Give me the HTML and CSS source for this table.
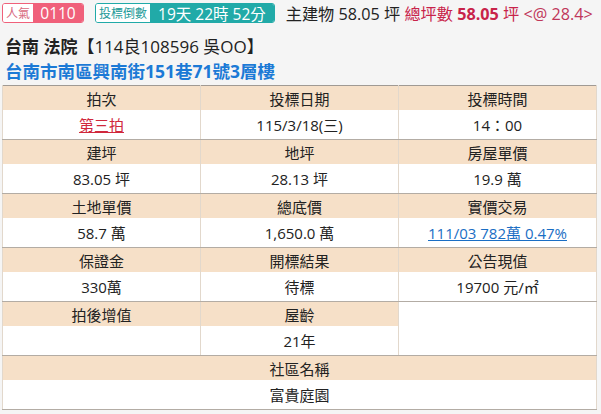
FILE: index.html
```html
<!DOCTYPE html>
<html lang="zh-Hant">
<head>
<meta charset="utf-8">
<link rel="stylesheet" href="styles.css">
</head>
<body>
<div class="page">
  <div class="topbar">
    <span class="badge badge-pink"><span class="badge-label">人氣</span><span class="badge-value">0110</span></span>
    <span class="badge badge-teal"><span class="badge-label">投標倒數</span><span class="badge-value">19天 22時 52分</span></span>
    <span class="area">主建物 58.05 坪 <span class="total">總坪數 <b>58.05</b> 坪</span> <span class="unit">&lt;@ 28.4&gt;</span></span>
  </div>
  <div class="title"><span class="court">台南 法院</span>【114良108596 吳OO】</div>
  <div class="addr">台南市南區興南街151巷71號3層樓</div>
  <table class="info">
    <tr class="hd"><th>拍次</th><th>投標日期</th><th>投標時間</th></tr>
    <tr class="vl"><td><a class="red-link">第三拍</a></td><td>115/3/18(三)</td><td>14：00</td></tr>
    <tr class="hd"><th>建坪</th><th>地坪</th><th>房屋單價</th></tr>
    <tr class="vl"><td>83.05 坪</td><td>28.13 坪</td><td>19.9 萬</td></tr>
    <tr class="hd"><th>土地單價</th><th>總底價</th><th>實價交易</th></tr>
    <tr class="vl"><td>58.7 萬</td><td>1,650.0 萬</td><td><a class="blue-link">111/03 782萬 0.47%</a></td></tr>
    <tr class="hd"><th>保證金</th><th>開標結果</th><th>公告現值</th></tr>
    <tr class="vl"><td>330萬</td><td>待標</td><td>19700 元/㎡</td></tr>
    <tr class="hd"><th>拍後增值</th><th>屋齡</th><td class="empty" rowspan="2"></td></tr>
    <tr class="vl"><td></td><td>21年</td></tr>
    <tr class="hd"><th colspan="3">社區名稱</th></tr>
    <tr class="vl"><td colspan="3">富貴庭園</td></tr>
  </table>
</div>
</body>
</html>
```
FILE: styles.css
```css
html, body {
  margin: 0;
  padding: 0;
  background: #f5f5f5;
}
body {
  font-family: "Open Sans", "Noto Sans CJK TC", sans-serif;
  color: #222;
}
.page {
  padding: 3px 4px 0 2px;
}
.topbar {
  display: flex;
  align-items: center;
  height: 20px;
  font-size: 16.2px;
}
.badge {
  display: inline-flex;
  flex: none;
  white-space: nowrap;
  height: 20px;
  box-sizing: border-box;
  border-radius: 3px;
  overflow: hidden;
  margin-right: 11px;
}
.badge-label {
  display: flex;
  align-items: center;
  background: #fff;
  font-size: 12px;
  padding: 0 3px;
}
.badge-value {
  display: flex;
  align-items: center;
  color: #fff;
  font-size: 15.5px;
  padding: 0 7px;
}
.badge-pink {
  border: 1px solid #f0607a;
}
.badge-pink .badge-label {
  color: #d86a80;
  width: 24px;
  justify-content: center;
}
.badge-pink .badge-value {
  background: #f0607a;
  width: 36px;
  justify-content: center;
}
.badge-teal {
  border: 1px solid #21aaa8;
}
.badge-teal .badge-label {
  color: #1c9a98;
  padding: 0 3px;
}
.badge-teal .badge-value {
  background: #21aaa8;
  padding: 0 8px 0 8px;
}
.area {
  flex: none;
  color: #222;
  white-space: nowrap;
}
.total {
  color: #c8234a;
}
.total b {
  font-weight: 700;
}
.unit {
  color: #c0365a;
}
.title {
  margin-top: 12px;
  line-height: 24px;
  font-size: 17px;
  padding-left: 3px;
  color: #222;
}
.court {
  font-weight: 700;
}
.addr {
  line-height: 24px;
  font-size: 17.5px;
  font-weight: 700;
  color: #1c7ad6;
  padding-left: 3px;
}
.info {
  margin-top: 2px;
  width: 595px;
  border-collapse: collapse;
  border: 1px solid #a09a94;
  table-layout: fixed;
  font-size: 15px;
}
.info th, .info td {
  text-align: center;
  font-weight: 400;
  color: #222;
  padding: 0;
  border-left: 1px solid #e2d8cc;
  border-right: 1px solid #e2d8cc;
}
.hd th, .hd td {
  height: 24px;
  background: #f6e0c8;
}
.vl td {
  height: 29px;
  background: #fff;
  border-bottom: 1px solid #b3aca4;
}
.hd td.empty {
  background: #fff;
  border-bottom: 1px solid #b3aca4;
}
.red-link {
  color: #d0283c;
  text-decoration: underline;
}
.blue-link {
  color: #1a6ec4;
  text-decoration: underline;
}
```
